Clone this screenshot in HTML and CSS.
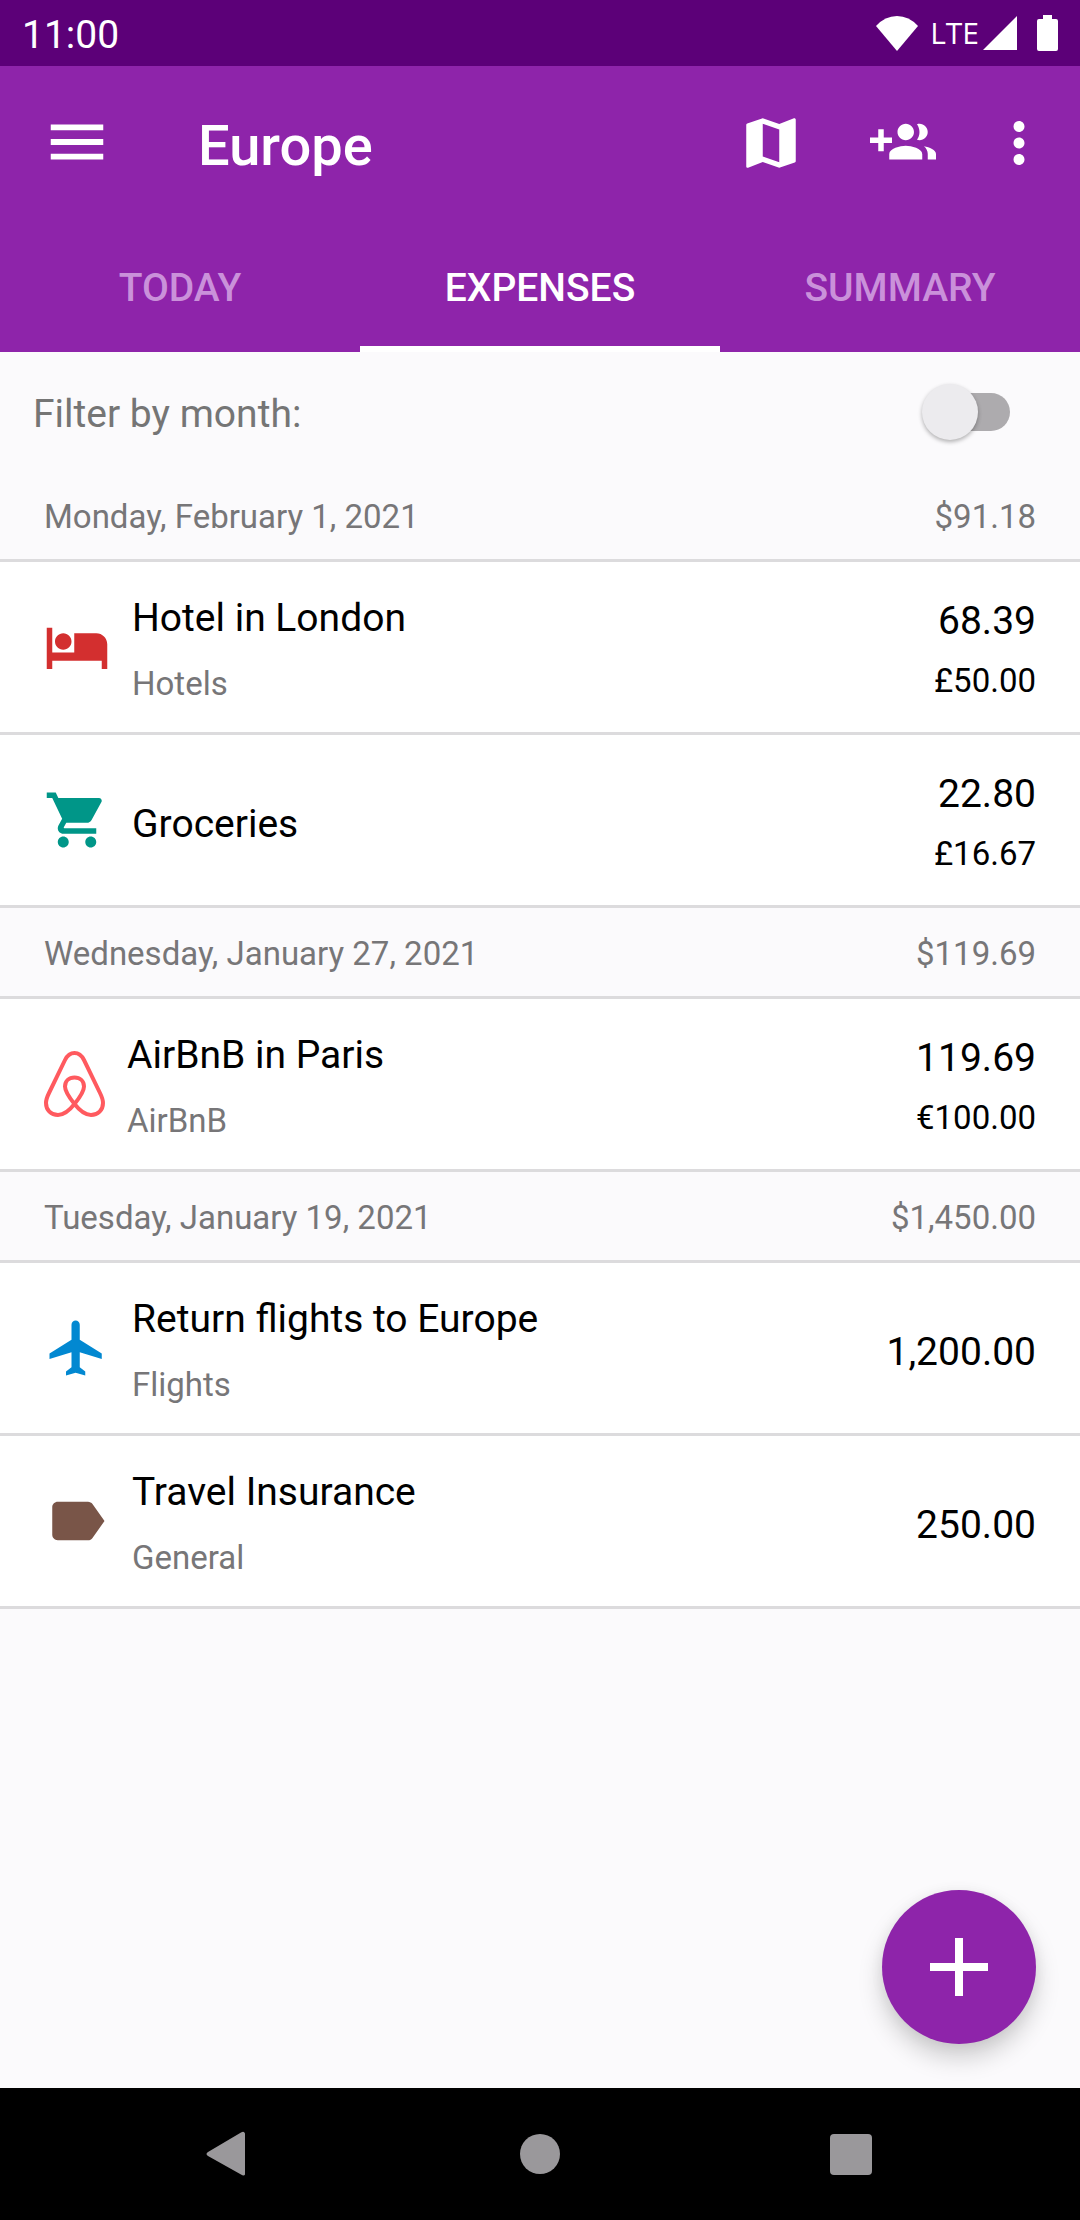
FILE: index.html
```html
<!DOCTYPE html>
<html lang="en">
<head>
<meta charset="utf-8">
<meta name="viewport" content="width=device-width, initial-scale=1">
<title>Europe – Expenses</title>
<link rel="stylesheet" href="styles.css">
</head>
<body>
<div class="status-bar">
  <span class="clock">11:00</span>
  <div class="indicators">
    <svg class="wifi" viewBox="0 0 42 35" aria-hidden="true"><path d="M0 10Q9 0 21 0T42 10L21 35z"/></svg>
    <span class="network">LTE</span>
    <svg class="signal" viewBox="0 0 34 34" aria-hidden="true"><path d="M0 34L34 0V34z"/></svg>
    <svg class="battery" viewBox="0 0 21 36" aria-hidden="true"><path d="M6 0h9v4h4q2 0 2 2v28q0 2-2 2H2q-2 0-2-2V6q0-2 2-2h4z"/></svg>
  </div>
</div>

<header class="app-header">
  <div class="toolbar">
    <button class="icon-button menu" type="button" aria-label="Open menu">
      <svg viewBox="0 0 24 24"><path d="M3 18h18v-2H3v2zm0-5h18v-2H3v2zm0-7v2h18V6H3z"/></svg>
    </button>
    <h1 class="title">Europe</h1>
    <button class="icon-button" type="button" aria-label="Map">
      <svg viewBox="0 0 24 24"><path d="M20.500 3l-.16.03L15 5.100 9 3 3.360 4.900c-.21.07-.36.25-.36.48V20.500c0 .28.22.5.5.5l.16-.03L9 18.900l6 2.100 5.640-1.900c.21-.07.36-.25.36-.48V3.500c0-.28-.22-.5-.5-.5zM15 19l-6-2.110V5l6 2.110V19z"/></svg>
    </button>
    <button class="icon-button" type="button" aria-label="Add people">
      <svg viewBox="0 0 24 24"><path d="M8 10H5V7H3v3H0v2h3v3h2v-3h3v-2zm10 1c1.660 0 2.990-1.340 2.990-3S19.660 5 18 5c-.32 0-.63.05-.91.14.57.81.9 1.790.9 2.860s-.34 2.040-.9 2.860c.28.09.59.14.91.14zm-5 0c1.660 0 2.990-1.340 2.990-3S14.660 5 13 5s-3 1.340-3 3 1.340 3 3 3zm6.620 2.160c.83.73 1.380 1.660 1.380 2.840v2h3v-2c0-1.540-2.370-2.490-4.380-2.840zM13 13c-2 0-6 1-6 3v2h12v-2c0-2-4-3-6-3z"/></svg>
    </button>
    <button class="icon-button more" type="button" aria-label="More options">
      <svg viewBox="0 0 24 24"><path d="M12 8c1.100 0 2-.9 2-2s-.9-2-2-2-2 .9-2 2 .9 2 2 2zm0 2c-1.100 0-2 .9-2 2s.9 2 2 2 2-.9 2-2-.9-2-2-2zm0 6c-1.100 0-2 .9-2 2s.9 2 2 2 2-.9 2-2-.9-2-2-2z"/></svg>
    </button>
  </div>
  <nav class="tabs" role="tablist">
    <button class="tab" type="button" role="tab" aria-selected="false">TODAY</button>
    <button class="tab active" type="button" role="tab" aria-selected="true">EXPENSES</button>
    <button class="tab" type="button" role="tab" aria-selected="false">SUMMARY</button>
  </nav>
</header>

<main class="content">
  <div class="filter">
    <label for="month-filter">Filter by month:</label>
    <input class="switch" id="month-filter" type="checkbox" role="switch">
  </div>

  <section>
    <h2 class="day"><span>Monday, February 1, 2021</span><span>$91.18</span></h2>
    <ul class="expenses">
      <li class="expense">
        <svg class="category hotel" viewBox="0 0 24 24" aria-hidden="true"><path d="M7 13c1.660 0 3-1.340 3-3S8.660 7 7 7s-3 1.340-3 3 1.340 3 3 3zm12-6h-8v7H3V5H1v15h2v-3h18v3h2v-9c0-2.210-1.790-4-4-4z"/></svg>
        <div class="details"><span class="name">Hotel in London</span><span class="kind">Hotels</span></div>
        <div class="amounts"><span class="amount">68.39</span><span class="original">£50.00</span></div>
      </li>
      <li class="expense">
        <svg class="category cart" viewBox="0 0 24 24" aria-hidden="true"><path d="M7 18c-1.100 0-1.990.9-1.990 2S5.900 22 7 22s2-.9 2-2-.9-2-2-2zM1 2v2h2l3.600 7.590-1.350 2.450c-.16.28-.25.61-.25.96 0 1.100.9 2 2 2h12v-2H7.420c-.14 0-.25-.11-.25-.25l.03-.12.9-1.630h7.450c.75 0 1.410-.41 1.750-1.030l3.580-6.490c.08-.14.12-.31.12-.48 0-.55-.45-1-1-1H5.210l-.94-2H1zm16 16c-1.100 0-1.990.9-1.990 2s.89 2 1.990 2 2-.9 2-2-.9-2-2-2z"/></svg>
        <div class="details"><span class="name">Groceries</span></div>
        <div class="amounts"><span class="amount">22.80</span><span class="original">£16.67</span></div>
      </li>
    </ul>
  </section>

  <section>
    <h2 class="day"><span>Wednesday, January 27, 2021</span><span>$119.69</span></h2>
    <ul class="expenses">
      <li class="expense">
        <svg class="category airbnb" viewBox="0 0 61 66" aria-hidden="true"><path d="M30.500 53C24 45 21 40 21 35.500C21 30 25 26.500 30.500 26.500S40 30 40 35.500C40 40 37 45 30.500 53C25 60 19.500 64 14 64C7 64 2 59 2 52C2 49 3 46 5 42L21 9C23.500 4 26.500 2 30.500 2S37.500 4 40 9L56 42C58 46 59 49 59 52C59 59 54 64 47 64C41.500 64 36 60 30.500 53z"/></svg>
        <div class="details"><span class="name">AirBnB in Paris</span><span class="kind">AirBnB</span></div>
        <div class="amounts"><span class="amount">119.69</span><span class="original">€100.00</span></div>
      </li>
    </ul>
  </section>

  <section>
    <h2 class="day"><span>Tuesday, January 19, 2021</span><span>$1,450.00</span></h2>
    <ul class="expenses">
      <li class="expense">
        <svg class="category flight" viewBox="0 0 24 24" aria-hidden="true"><path d="M21 16v-2l-8-5V3.500c0-.83-.67-1.500-1.500-1.500S10 2.670 10 3.500V9l-8 5v2l8-2.500V19l-2 1.500V22l3.500-1 3.500 1v-1.500L13 19v-5.500l8 2.500z"/></svg>
        <div class="details"><span class="name">Return flights to Europe</span><span class="kind">Flights</span></div>
        <div class="amounts"><span class="amount">1,200.00</span></div>
      </li>
      <li class="expense">
        <svg class="category general" viewBox="0 0 24 24" aria-hidden="true"><path d="M17.630 5.840C17.270 5.330 16.670 5 16 5L5 5.010C3.900 5.010 3 5.900 3 7v10c0 1.100.9 1.990 2 1.990L16 19c.67 0 1.270-.33 1.630-.84L22 12l-4.370-6.160z"/></svg>
        <div class="details"><span class="name">Travel Insurance</span><span class="kind">General</span></div>
        <div class="amounts"><span class="amount">250.00</span></div>
      </li>
    </ul>
  </section>

  <button class="fab" type="button" aria-label="Add expense">
    <svg viewBox="0 0 58 58"><path d="M25 0h8v25h25v8H33v25h-8V33H0v-8h25z"/></svg>
  </button>
</main>

<nav class="system-nav" aria-label="System">
  <button type="button" aria-label="Back"><svg viewBox="0 0 48 48"><path d="M40 3.500v41q-1 2-4 0L3 26q-3-2 0-4L36 2.500q3-2 4 1z"/></svg></button>
  <button type="button" aria-label="Home"><svg viewBox="0 0 48 48"><circle cx="24" cy="24" r="20"/></svg></button>
  <button type="button" aria-label="Recent apps"><svg viewBox="0 0 48 48"><rect x="3" y="4" width="42" height="41" rx="4"/></svg></button>
</nav>
</body>
</html>
```
FILE: styles.css
```css
* {
  box-sizing: border-box;
}

body {
  margin: 0;
  min-height: 100vh;
  display: flex;
  flex-direction: column;
  background: #fbfafc;
  color: #000;
  font-family: Roboto, "Liberation Sans", sans-serif;
  font-size: 39px;
}

button {
  margin: 0;
  padding: 0;
  border: 0;
  background: none;
  color: inherit;
  font: inherit;
  display: flex;
  align-items: center;
  justify-content: center;
}

svg {
  display: block;
  flex: none;
  fill: currentColor;
}

/* Status bar */
.status-bar {
  height: 66px;
  padding: 0 22px;
  display: flex;
  align-items: center;
  justify-content: space-between;
  background: #5c0078;
  color: #fff;
}

.clock {
  padding-top: 4px;
}

.indicators {
  display: flex;
  align-items: center;
}

.wifi {
  width: 42px;
  height: 35px;
  margin-right: 12px;
}

.network {
  font-family: "Open Sans", "Liberation Sans", sans-serif;
  font-size: 30px;
  line-height: 36px;
  margin-right: 4px;
}

.signal {
  width: 34px;
  height: 34px;
  margin-right: 20px;
}

.battery {
  width: 21px;
  height: 36px;
}

/* App header */
.app-header {
  background: #8e24aa;
  color: #fff;
}

.toolbar {
  height: 154px;
  padding-right: 11px;
  display: flex;
  align-items: center;
}

.icon-button {
  width: 132px;
  height: 132px;
}

.icon-button svg {
  width: 66px;
  height: 66px;
}

.menu {
  width: 154px;
  padding-bottom: 2px;
}

.menu svg {
  width: 70px;
  height: 70px;
}

.more {
  width: 100px;
}

.title {
  flex: 1;
  margin: 0;
  padding: 6px 0 0 44px;
  font-size: 56px;
  font-weight: 500;
}

.tabs {
  display: grid;
  grid-template-columns: repeat(3, 1fr);
}

.tab {
  height: 132px;
  padding-top: 10px;
  border-bottom: 6px solid transparent;
  color: #ca91da;
  font-weight: 500;
}

.tab.active {
  border-bottom-color: #fff;
  color: #fff;
}

/* Expense list */
.content {
  flex: 1;
  position: relative;
}

.filter {
  height: 119px;
  padding: 0 70px 0 33px;
  display: flex;
  align-items: center;
  justify-content: space-between;
  color: #757575;
}

.filter label {
  padding-top: 4px;
}

.switch {
  appearance: none;
  position: relative;
  width: 82px;
  height: 38px;
  margin: 0;
  border-radius: 19px;
  background: #adabae;
}

.switch::before {
  content: "";
  position: absolute;
  top: -9px;
  left: -6px;
  width: 56px;
  height: 56px;
  border-radius: 50%;
  background: #ecebee;
  box-shadow: 0 2px 4px rgba(0, 0, 0, 0.3);
}

.switch:checked::before {
  left: 32px;
  background: #8e24aa;
}

.day {
  height: 91px;
  margin: 0;
  padding: 2px 44px 0;
  display: flex;
  align-items: center;
  justify-content: space-between;
  border-bottom: 3px solid #dcdbdd;
  color: #777678;
  font-size: 33px;
  font-weight: 400;
}

.expenses {
  margin: 0;
  padding: 0;
  list-style: none;
}

.expense {
  height: 173px;
  padding: 0 44px;
  display: flex;
  align-items: center;
  gap: 22px;
  border-bottom: 3px solid #dcdbdd;
  background: #fff;
}

.category {
  width: 66px;
  height: 66px;
}

.hotel { color: #d32f2f; }
.cart { color: #009688; }
.flight { color: #0288d1; }
.general { color: #795548; }

.airbnb {
  width: 61px;
  fill: none;
  stroke: #ff5a5f;
  stroke-width: 4;
}

.details,
.amounts {
  padding-top: 8px;
  display: flex;
  flex-direction: column;
}

.details {
  flex: 1;
  line-height: 66px;
}

.amounts {
  text-align: right;
  line-height: 59px;
}

.kind {
  color: #777678;
  font-size: 33px;
}

.original {
  font-size: 33px;
}

.fab {
  position: absolute;
  right: 44px;
  bottom: 44px;
  width: 154px;
  height: 154px;
  border-radius: 50%;
  background: #8e24aa;
  color: #fff;
  box-shadow: 0 14px 24px rgba(0, 0, 0, 0.18), 0 2px 14px rgba(0, 0, 0, 0.06);
}

.fab svg {
  width: 58px;
  height: 58px;
}

/* System navigation */
.system-nav {
  height: 132px;
  display: flex;
  align-items: center;
  justify-content: center;
  gap: 179px;
  background: #000;
  color: #9a989b;
}

.system-nav button {
  width: 132px;
  height: 132px;
}

.system-nav svg {
  width: 48px;
  height: 48px;
}
```
